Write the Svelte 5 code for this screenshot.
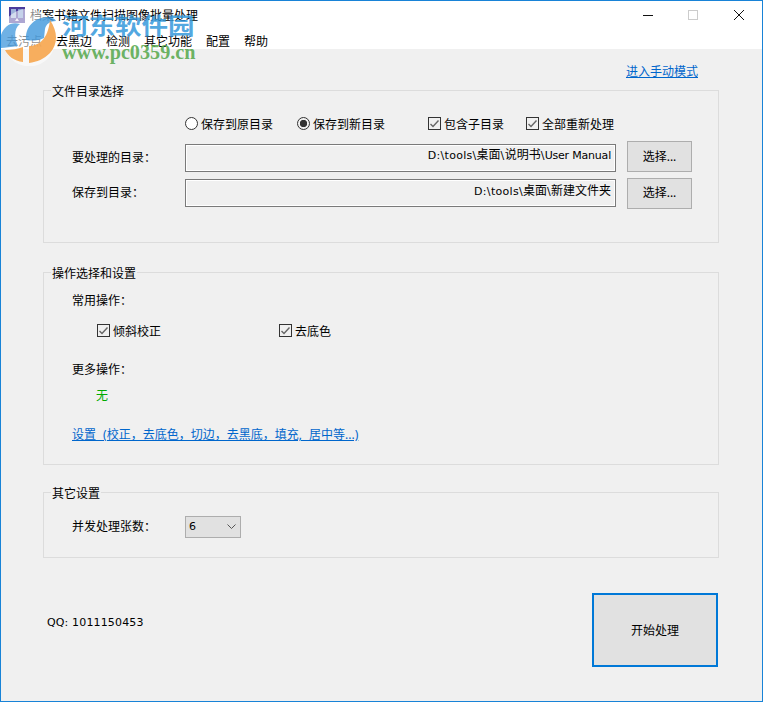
<script lang="ts">
  const menus = ['去污点', '去黑边', '检测', '其它功能', '配置', '帮助'];
</script>

<div class="window">
  <header>
    <div class="titlebar">
      <svg class="appicon" width="16" height="16" viewBox="0 0 16 16">
        <rect width="16" height="16" fill="#4b3c9c" />
        <rect x="2" y="2" width="5" height="9" fill="#9fb4da" />
        <rect x="9" y="2" width="5" height="9" fill="#7f9bd0" />
        <path d="M6 14l2-3 2 3z" fill="#e8e0f0" />
      </svg>
      <span class="title">档案书籍文件扫描图像批量处理</span>
      <div class="controls">
        <svg width="46" height="30" viewBox="0 0 46 30"><path d="M19 14.5h10" stroke="#111" stroke-width="1" /></svg>
        <svg width="46" height="30" viewBox="0 0 46 30"><rect x="18.5" y="9.5" width="9" height="9" fill="none" stroke="#ccc" /></svg>
        <svg width="46" height="30" viewBox="0 0 46 30"><path d="M18 9l10 10M28 9L18 19" stroke="#111" stroke-width="1" /></svg>
      </div>
    </div>
    <nav>
      {#each menus as m}
        <span>{m}</span>
      {/each}
    </nav>
  </header>

  <main>
    <div class="modelink"><a href="#manual">进入手动模式</a></div>

    <fieldset class="dirs">
      <legend>文件目录选择</legend>
      <div class="options">
        <label class="radio first"><i class="dot"></i>保存到原目录</label>
        <label class="radio second"><i class="dot on"></i>保存到新目录</label>
        <label class="check third"><i class="box">{@render tick()}</i>包含子目录</label>
        <label class="check"><i class="box">{@render tick()}</i>全部重新处理</label>
      </div>
      <div class="dirrow">
        <span class="rowlabel">要处理的目录：</span>
        <div class="path"><span class="latin seg">D:\tools\</span>桌面<span class="latin seg">\</span>说明书<span class="latin seg">\</span><span class="latin tight">User Manual</span></div>
        <button class="pick">选择...</button>
      </div>
      <div class="dirrow">
        <span class="rowlabel">保存到目录：</span>
        <div class="path"><span class="latin seg">D:\tools\</span>桌面<span class="latin seg">\</span>新建文件夹</div>
        <button class="pick">选择...</button>
      </div>
    </fieldset>

    <fieldset class="ops">
      <legend>操作选择和设置</legend>
      <div class="sub">常用操作：</div>
      <div class="opchecks">
        <label class="check wide"><i class="box">{@render tick()}</i>倾斜校正</label>
        <label class="check"><i class="box">{@render tick()}</i>去底色</label>
      </div>
      <div class="sub more">更多操作：</div>
      <div class="none">无</div>
      <a class="settings" href="#settings">设置 (校正，去底色，切边，去黑底，填充, 居中等...)</a>
    </fieldset>

    <fieldset class="other">
      <legend>其它设置</legend>
      <div class="concurrency">
        <span class="conclabel">并发处理张数：</span>
        <div class="select">
          <span class="latin">6</span>
          <svg width="9" height="6" viewBox="0 0 9 6"><path d="M.5.5L4.5 4.5 8.5.5" fill="none" stroke="#555" /></svg>
        </div>
      </div>
    </fieldset>

    <div class="footer">
      <span class="qq latin">QQ: 1011150453</span>
      <button class="start">开始处理</button>
    </div>
  </main>

  <div class="watermark" aria-hidden="true">
    <svg class="wmlogo" width="60" height="66" viewBox="0 0 60 66">
      <path d="M6 52A26 26 0 0 1 50 20L55 37A26 26 0 0 1 6 52Z" fill="#fff" opacity=".55" />
      <path d="M0 48C-2 31 8 20 20 24 14 28 14 38 18 46 10 47 4 48 0 48Z" fill="#3f97dc" opacity=".75" />
      <path d="M26 40C25 28 33 18 47 17 52 17 55 19 56 21 50 21 46 24 45 29L44 38C38 41 31 41 26 40Z" fill="#3f97dc" opacity=".8" />
      <path d="M5 50C12 50 18 49 23 47V62C14 61 8 56 5 50ZM29 46C38 46 48 40 50 20 58 32 58 44 50 53 44 59 37 62 29 63Z" fill="#f6a54c" opacity=".9" />
    </svg>
    <span class="wmname">河东软件园</span>
    <span class="wmurl">www.pc0359.cn</span>
  </div>
</div>

{#snippet tick()}
  <svg width="11" height="11" viewBox="0 0 11 11"><path d="M1.5 6l2.500 2.500L9.500 2.500" fill="none" stroke="#666" stroke-width="1.4" /></svg>
{/snippet}

<style>
  :global(body) {
    margin: 0;
    background: #f0f0f0;
  }

  .window {
    position: relative;
    box-sizing: border-box;
    width: 763px;
    height: 702px;
    border: 1px solid #1883d7;
    background: #f0f0f0;
    overflow: hidden;
    font: 12px/16px "Noto Sans", "Noto Sans CJK SC", sans-serif;
    color: #000;
  }

  .latin {
    font-family: "DejaVu Sans", sans-serif;
    font-size: 11px;
  }

  .seg {
    letter-spacing: 0.3px;
  }

  .tight {
    letter-spacing: -0.2px;
  }

  header {
    background: #fff;
    height: 48px;
  }

  .titlebar {
    display: flex;
    align-items: center;
    height: 30px;
    padding-left: 8px;
  }

  .appicon {
    margin: 0 5px 2px 0;
  }

  .controls {
    display: flex;
    margin-left: auto;
  }

  .controls svg {
    display: block;
  }

  nav {
    display: flex;
    gap: 14px;
    padding: 3px 0 0 5px;
  }

  main {
    padding: 0 43px 0 42px;
  }

  .modelink {
    height: 33px;
    padding: 15px 21px 0 0;
    box-sizing: border-box;
    text-align: right;
  }

  a {
    color: #0066cc;
  }

  fieldset {
    margin: 0;
    padding: 0;
    border: 1px solid #dcdcdc;
    box-sizing: border-box;
    min-width: 0;
  }

  legend {
    margin-left: 7px;
    padding: 0 1px;
    line-height: 16px;
    transform: translateY(2px);
  }

  .dirs {
    height: 161px;
  }

  .options {
    display: flex;
    align-items: center;
    height: 16px;
    margin: 19px 0 0 141px;
  }

  label {
    display: flex;
    align-items: center;
    white-space: nowrap;
  }

  .first {
    width: 112px;
  }

  .second {
    width: 131px;
  }

  .third {
    width: 98px;
  }

  .dot {
    box-sizing: border-box;
    width: 13px;
    height: 13px;
    border: 1px solid #333;
    border-radius: 50%;
    background: #fff;
    margin: 0 3px 3px 0;
  }

  .dot.on {
    background: radial-gradient(circle, #333 0 3.4px, #f0f0f0 4px);
  }

  .box {
    box-sizing: border-box;
    display: flex;
    width: 13px;
    height: 13px;
    border: 1px solid #333;
    background: #f0f0f0;
    margin: 0 3px 3px 0;
  }

  .dirrow {
    display: flex;
    align-items: center;
    height: 28px;
    margin-top: 11px;
  }

  .dirrow + .dirrow {
    margin-top: 7px;
  }

  .dirrow + .dirrow .pick {
    margin-bottom: 0;
  }

  .dirrow + .dirrow .path {
    padding-top: 3px;
  }

  .rowlabel {
    box-sizing: border-box;
    width: 141px;
    padding-left: 28px;
  }

  .path {
    box-sizing: border-box;
    width: 431px;
    height: 28px;
    border: 1px solid #7a7a7a;
    box-shadow: inset 0 0 0 1px #fff;
    text-align: right;
    padding: 2px 4px 0 0;
    white-space: nowrap;
  }

  button {
    font: inherit;
    color: #000;
    padding: 0;
    background: #e1e1e1;
    border: 1px solid #adadad;
  }

  .pick {
    width: 65px;
    height: 31px;
    margin: 0 0 3px 11px;
  }

  .ops {
    height: 201px;
    margin-top: 21px;
  }

  .sub {
    margin: 13px 0 0 28px;
  }

  .opchecks {
    display: flex;
    margin: 15px 0 0 53px;
  }

  .wide {
    width: 182px;
  }

  .more {
    margin-top: 22px;
  }

  .none {
    margin: 10px 0 0 52px;
    color: #00aa00;
  }

  .settings {
    display: block;
    margin: 23px 0 0 28px;
    width: max-content;
    word-spacing: 4px;
  }

  .other {
    height: 74px;
    margin-top: 19px;
  }

  .concurrency {
    display: flex;
    align-items: center;
    margin: 16px 0 0 28px;
  }

  .conclabel {
    width: 113px;
  }

  .select {
    box-sizing: border-box;
    display: flex;
    align-items: center;
    justify-content: space-between;
    width: 56px;
    height: 22px;
    padding: 0 4px 0 3px;
    background: #e1e1e1;
    border: 1px solid #adadad;
  }

  .footer {
    display: flex;
    justify-content: space-between;
    align-items: flex-start;
    margin: 35px 1px 0 4px;
  }

  .qq {
    margin-top: 22px;
    letter-spacing: 0.15px;
  }

  .start {
    box-sizing: border-box;
    width: 126px;
    height: 74px;
    padding-top: 2px;
    border: 2px solid #0078d7;
  }

  .watermark {
    position: absolute;
    left: 0;
    top: 0;
    width: 210px;
    height: 70px;
    pointer-events: none;
  }

  .wmlogo {
    position: absolute;
    left: -1px;
    top: -1px;
  }

  .wmname {
    position: absolute;
    left: 61px;
    top: 11px;
    font: 700 26.500px/30px "Noto Sans CJK SC", sans-serif;
    color: rgba(52, 152, 219, 0.85);
    white-space: nowrap;
    transform: scaleY(0.85);
    transform-origin: top;
  }

  .wmurl {
    position: absolute;
    left: 61px;
    top: 41px;
    font: 700 20.200px/20px "Liberation Serif", serif;
    color: rgba(90, 170, 80, 0.9);
    white-space: nowrap;
  }
</style>
